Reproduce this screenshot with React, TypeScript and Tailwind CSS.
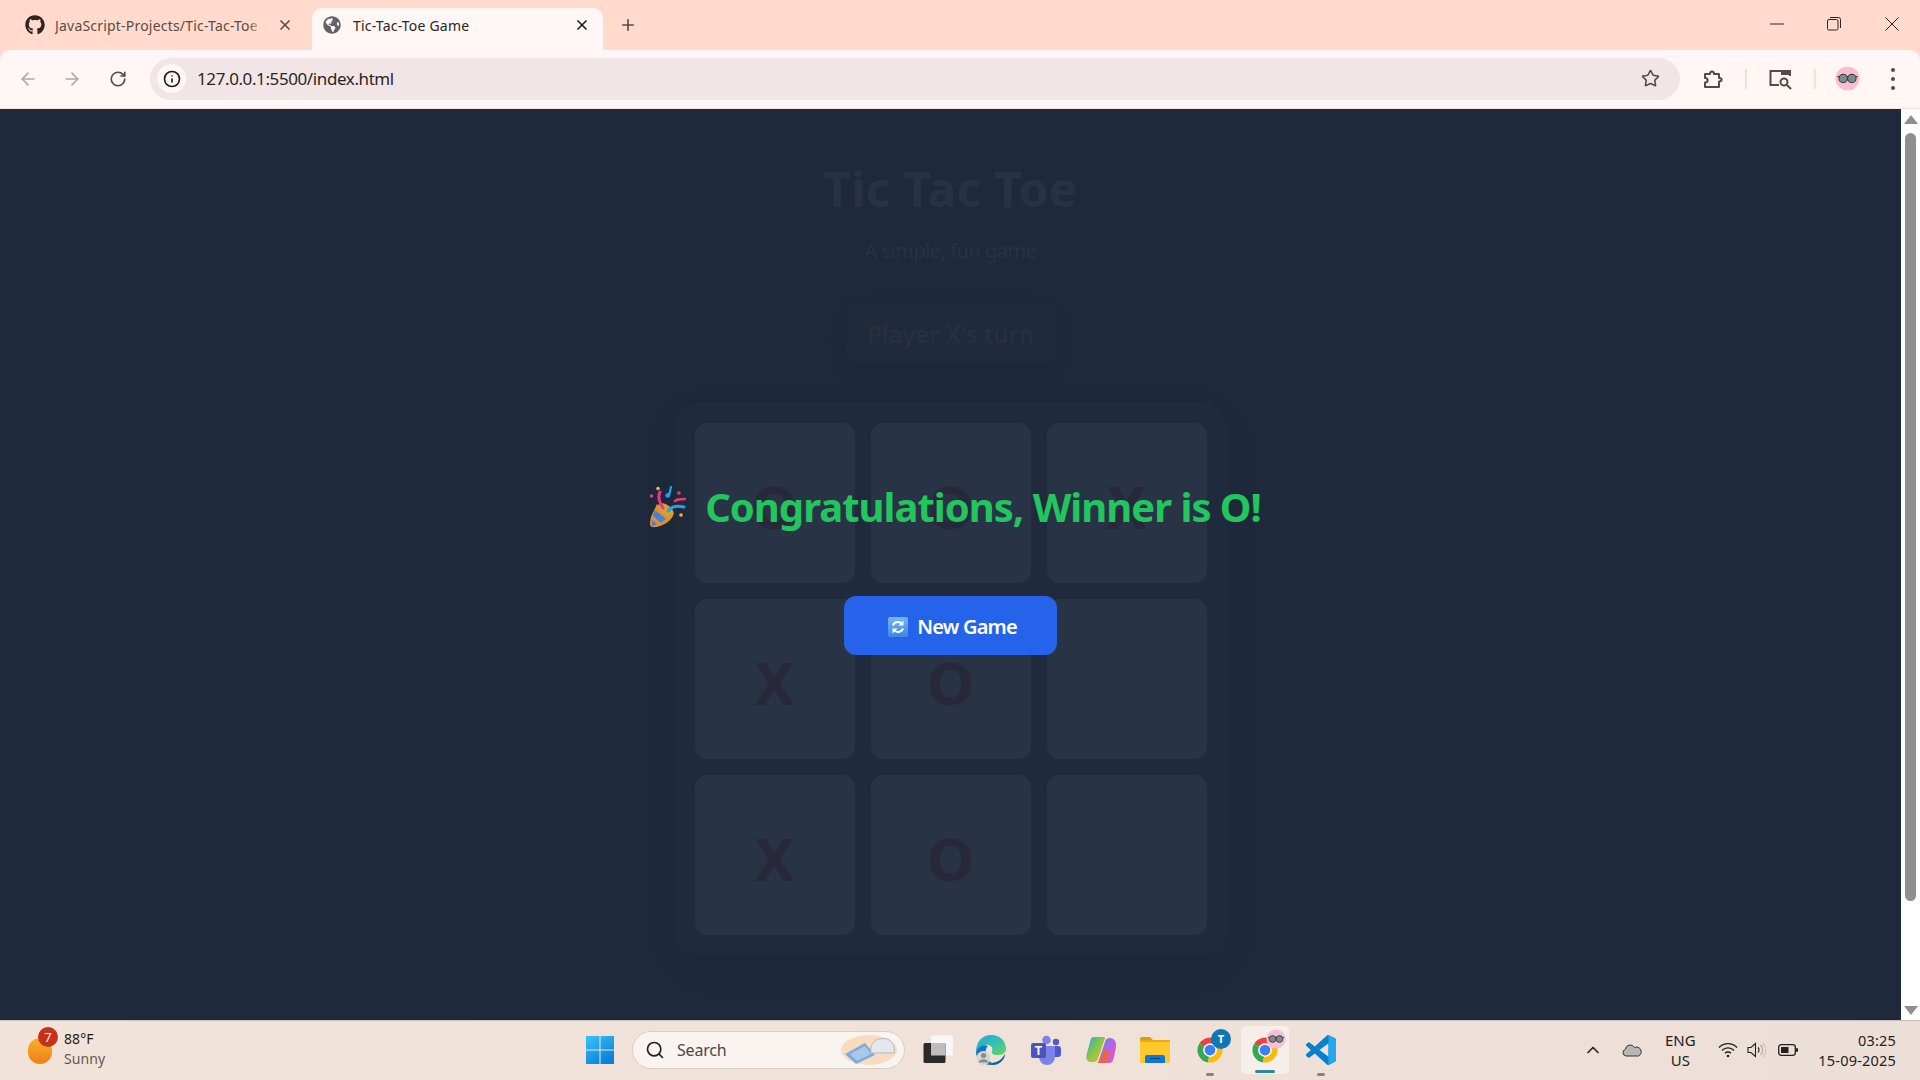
import React from "react";
import { FaGithub, FaGlobeAmericas } from "react-icons/fa";
import { ArrowLeft, ArrowRight, RotateCw, Info, Star, X, Plus, ChevronUp, Search } from "lucide-react";

function Glasses({ size }: { size: number }) {
  return (
    <svg width={size} height={size} viewBox="0 0 26 26">
      <circle cx="13" cy="13" r="12.5" fill="#f9bdd4" />
      <path d="M2.5 11 H23.5" stroke="#3f3f46" strokeWidth="1.2" />
      <circle cx="8.5" cy="13" r="4.4" fill="#7d8a8a" stroke="#33363a" strokeWidth="1.1" />
      <circle cx="17.5" cy="13" r="4.4" fill="#7d8a8a" stroke="#33363a" strokeWidth="1.1" />
    </svg>
  );
}

function Chrome({ size = 30 }: { size?: number }) {
  return (
    <svg width={size} height={size} viewBox="0 0 48 48">
      <path d="M24 24 L6.68 14 A20 20 0 0 1 41.32 14 Z" fill="#e8453c" />
      <path d="M24 24 L21 44 A20 20 0 0 1 6.68 14 Z" fill="#34a853" />
      <path d="M24 24 L41.32 14 A20 20 0 0 1 21 43.8 Z" fill="#fbbc05" />
      <circle cx="24" cy="24" r="11" fill="#ffffff" />
      <circle cx="24" cy="24" r="8.6" fill="#3b7ff0" />
    </svg>
  );
}

function Edge() {
  return (
    <svg width="30" height="30" viewBox="0 0 30 30">
      <defs>
        <linearGradient id="edgeA" x1="0" y1="0" x2="1" y2="1">
          <stop offset="0" stopColor="#1ea7e0" />
          <stop offset="0.6" stopColor="#39c5a5" />
          <stop offset="1" stopColor="#6fd64f" />
        </linearGradient>
      </defs>
      <path d="M15 0 C24 0 30 6 30 14 C30 19 25 20 21 20 C17 20 15 18 16 16 C18 12 13 9 9 10 C4 11 1 15 0 17 C0 7 6 0 15 0 Z" fill="url(#edgeA)" />
      <path d="M0 17 C2 11 8 9 12 11 C8 14 9 24 16 28 C18 29 20 30 15 30 C7 30 0 25 0 17 Z" fill="#1473c4" />
      <path d="M16 28 C21 27 25 26 29 19 C29 25 23 30 17 30 Z" fill="#0e5ea8" />
      <circle cx="7.5" cy="23" r="7" fill="#d8d4cf" />
      <circle cx="7.5" cy="20.5" r="2.6" fill="#8c8c8c" />
      <path d="M2.5 27.5 A5.2 4.4 0 0 1 12.5 27.5 Z" fill="#8c8c8c" />
    </svg>
  );
}

function Teams() {
  return (
    <svg width="30" height="30" viewBox="0 0 30 30">
      <circle cx="25" cy="7" r="3.2" fill="#5059c9" />
      <rect x="19" y="11" width="11" height="11" rx="3" fill="#5059c9" />
      <circle cx="15.5" cy="5" r="4.3" fill="#7b83eb" />
      <path d="M8 11 H24 V22 A8 8 0 0 1 8 22 Z" fill="#7b83eb" />
      <rect x="0" y="8" width="15" height="15" rx="2" fill="#4b53bc" />
      <text x="7.5" y="19.5" textAnchor="middle" fontSize="12" fontWeight="700" fill="#fff" fontFamily="Liberation Sans">T</text>
    </svg>
  );
}

function Copilot() {
  return (
    <svg width="30" height="30" viewBox="0 0 30 30">
      <defs>
        <linearGradient id="copA" x1="0" y1="0" x2="1" y2="1">
          <stop offset="0" stopColor="#1fa8e0" />
          <stop offset="0.5" stopColor="#8fc63f" />
          <stop offset="1" stopColor="#f5b63c" />
        </linearGradient>
        <linearGradient id="copB" x1="0" y1="0" x2="1" y2="1">
          <stop offset="0" stopColor="#3a8fe8" />
          <stop offset="0.5" stopColor="#b765e0" />
          <stop offset="1" stopColor="#f0589a" />
        </linearGradient>
      </defs>
      <path d="M8 2 H17 C20 2 19 4 18 6 L12 24 C11 27 8 27 5 27 C1 27 -1 23 1 18 L4 7 C5 3 6 2 8 2 Z" fill="url(#copA)" />
      <path d="M14 28 H23 C26 28 27 26 28 22 L30 12 C31 7 28 3 24 3 C21 3 20 4 19 7 L13 25 C12 27 13 28 14 28 Z" fill="url(#copB)" />
      <path d="M11 28 H18 C20 28 21 25 22 22 L23 18 L18 14 C16 20 15 26 11 28 Z" fill="#f0653f" />
    </svg>
  );
}

function Folder() {
  return (
    <svg width="30" height="26" viewBox="0 0 30 26">
      <path d="M0 2 A2 2 0 0 1 2 0 H10 L13 3 H0 Z" fill="#d99c0a" />
      <path d="M0 3 H30 V25 A1 1 0 0 1 29 26 H1 A1 1 0 0 1 0 25 Z" fill="#ffc92e" />
      <path d="M0 3 H30 V5 H0 Z" fill="#e6a817" />
      <path d="M5 26 V20 A2 2 0 0 1 7 18 H23 A2 2 0 0 1 25 20 V26 Z" fill="#0f78d4" />
      <path d="M10 21.5 H20" stroke="#073f80" strokeWidth="1" />
    </svg>
  );
}

function VSCode() {
  return (
    <svg width="30" height="30" viewBox="0 0 24 24">
      <path d="M23.15 2.587L18.21.21a1.494 1.494 0 0 0-1.705.29l-9.46 8.63-4.12-3.128a.999.999 0 0 0-1.276.057L.327 7.261A1 1 0 0 0 .326 8.74L3.899 12 .326 15.26a1 1 0 0 0 .001 1.479L1.65 17.94a.999.999 0 0 0 1.276.057l4.12-3.128 9.46 8.63a1.492 1.492 0 0 0 1.704.29l4.942-2.377A1.5 1.5 0 0 0 24 20.06V3.939a1.5 1.5 0 0 0-.85-1.352zm-5.146 14.861L10.826 12l7.178-5.448v10.896z" fill="#0a7fcd" />
      <path d="M18 0.05 L23.15 2.587 A1.5 1.5 0 0 1 24 3.94 V20.06 A1.5 1.5 0 0 1 23.15 21.41 L18 23.95 Z" fill="#22a7f2" />
    </svg>
  );
}

function WindowsLogo() {
  return (
    <svg width="30" height="30" viewBox="0 0 30 30">
      <defs>
        <linearGradient id="winA" x1="0" y1="0" x2="0.6" y2="1">
          <stop offset="0" stopColor="#36c5f5" />
          <stop offset="1" stopColor="#0b7fdc" />
        </linearGradient>
      </defs>
      <path d="M1 1 H14.5 V14.5 H1 Z M15.5 1 H29 V14.5 H15.5 Z M1 15.5 H14.5 V29 H1 Z M15.5 15.5 H29 V29 H15.5 Z" fill="url(#winA)" />
    </svg>
  );
}

function TaskView() {
  return (
    <svg width="30" height="30" viewBox="0 0 30 30">
      <rect x="8" y="0.5" width="22" height="20" rx="1.5" fill="#f7f7f7" />
      <rect x="0.5" y="8" width="22" height="20" rx="1.5" fill="#2a2a2a" />
      <rect x="8" y="8" width="14.5" height="12.5" fill="#bdbdbd" />
    </svg>
  );
}

function Popper() {
  return (
    <svg width="40" height="42" viewBox="-3 0 40 42">
      <path d="M8 18 L24 30 C20 38 8 42 3 41 C0 40 1 36 2 31 Z" fill="#e0912f" />
      <path d="M6 24 L17 33 L12 37 L4 30 Z" fill="#4a7fd6" />
      <path d="M3 34 L8 38 L3 40.5 Z" fill="#4a7fd6" />
      <ellipse cx="17" cy="24" rx="9" ry="5" transform="rotate(38 17 24)" fill="#d6a02c" />
      <path d="M14 22 C10 16 9 10 11 6" stroke="#f0367f" strokeWidth="3" fill="none" strokeLinecap="round" />
      <path d="M19 25 C22 21 27 19 35 21" stroke="#2f9ce8" strokeWidth="3" fill="none" strokeLinecap="round" />
      <path d="M26 15 C28 13 31 13 36 13" stroke="#f0367f" strokeWidth="2.6" fill="none" strokeLinecap="round" />
      <path d="M22 1 L20 10 C18 12 16 9 19 8" stroke="#2f9ce8" strokeWidth="2.2" fill="none" strokeLinecap="round" />
      <circle cx="9" cy="2.5" r="1.8" fill="#f5b63c" />
      <circle cx="2.5" cy="10" r="1.8" fill="#e0408f" />
      <circle cx="30" cy="7" r="1.8" fill="#e0408f" />
      <circle cx="32" cy="29" r="1.8" fill="#f5b63c" />
    </svg>
  );
}

function RefreshEmoji() {
  return (
    <svg width="20" height="20" viewBox="0 0 20 20">
      <defs>
        <linearGradient id="refA" x1="0" y1="0" x2="0" y2="1">
          <stop offset="0" stopColor="#70b8f8" />
          <stop offset="1" stopColor="#3f86e0" />
        </linearGradient>
      </defs>
      <rect width="20" height="20" rx="2" fill="url(#refA)" />
      <path d="M5 8.5 A5.2 5.2 0 0 1 14 7" stroke="#fff" strokeWidth="2" fill="none" />
      <path d="M15 11.5 A5.2 5.2 0 0 1 6 13" stroke="#fff" strokeWidth="2" fill="none" />
      <path d="M15.5 3.5 V8.5 H10.5 Z" fill="#fff" />
      <path d="M4.5 16.5 V11.5 H9.5 Z" fill="#fff" />
    </svg>
  );
}

function Cell({ v }: { v: string }) {
  return (
    <div className="w-[160px] h-[160px] rounded-[12px] bg-[#283345] flex items-center justify-center text-[60px] leading-none font-bold text-[#28283b] pt-[5px]">
      {v}
    </div>
  );
}

const cells = ["O", "O", "X", "X", "O", "", "X", "O", ""];

export default function App() {
  return (
    <div className="w-[1920px] h-[1080px] flex flex-col overflow-hidden bg-[#ffdacd] font-['Noto_Sans','Open_Sans',sans-serif]">
      {/* Tab strip */}
      <div className="h-[50px] shrink-0 flex items-end text-[14px] tracking-[0.2px]">
        <div className="w-[312px] h-[42px] flex items-center pl-[25px] pb-[8px] text-[#5d4a44]">
          <FaGithub className="w-[20px] h-[20px] text-[#2d2320] shrink-0" />
          <span className="relative ml-[10px] w-[208px] whitespace-nowrap overflow-hidden">
            JavaScript-Projects/Tic-Tac-Toe
            <span className="absolute right-0 top-0 bottom-0 w-[14px] bg-gradient-to-r from-transparent to-[#ffdacd]" />
          </span>
          <X className="ml-[14px] w-[16px] h-[16px] shrink-0" strokeWidth={2.5} />
        </div>
        <div className="w-[291px] h-[42px] bg-[#fff7f5] rounded-t-[10px] flex items-center pl-[11px] pb-[8px] text-[#2e2522]">
          <FaGlobeAmericas className="w-[18px] h-[18px] text-[#5f6368] shrink-0" />
          <span className="ml-[12px] w-[221px] whitespace-nowrap">Tic-Tac-Toe Game</span>
          <X className="w-[16px] h-[16px] shrink-0 text-[#1f1a18]" strokeWidth={2.5} />
        </div>
        <div className="h-[42px] flex items-center ml-[16px] pb-[8px] text-[#5d4a44]">
          <Plus className="w-[18px] h-[18px]" strokeWidth={2.2} />
        </div>
        <div className="flex-1" />
        <div className="h-[50px] flex items-center text-[#2e2522] pb-[2px]">
          <svg width="14" height="2" viewBox="0 0 14 2"><path d="M0 1H14" stroke="#2e2522" strokeWidth="1" /></svg>
          <svg className="ml-[43px]" width="14" height="14" viewBox="0 0 14 14" fill="none" stroke="#2e2522" strokeWidth="1">
            <rect x="0.5" y="2.5" width="10.5" height="10.5" rx="1.5" />
            <path d="M3 0.5 H11.5 A2 2 0 0 1 13.5 2.5 V11" />
          </svg>
          <svg className="ml-[44px] mr-[21px]" width="14" height="14" viewBox="0 0 14 14" fill="none" stroke="#2e2522" strokeWidth="1">
            <path d="M0.5 0.5 L13.5 13.5 M13.5 0.5 L0.5 13.5" />
          </svg>
        </div>
      </div>

      {/* Toolbar */}
      <div className="h-[59px] shrink-0 bg-[#fff7f5] rounded-t-[10px] border-b-[1px] border-[#ffe3da] flex items-center pb-[1px]">
        <ArrowLeft className="ml-[18px] w-[20px] h-[20px] text-[#b0a8a5]" strokeWidth={2} />
        <ArrowRight className="ml-[24px] w-[20px] h-[20px] text-[#b0a8a5]" strokeWidth={2} />
        <RotateCw className="ml-[27px] w-[18px] h-[18px] text-[#5a4842]" strokeWidth={2.2} />
        <div className="ml-[23px] w-[1530px] h-[42px] rounded-full bg-[#f1e6e5] flex items-center pl-[7px]">
          <div className="w-[29px] h-[29px] rounded-full bg-[#fff7f5] flex items-center justify-center">
            <Info className="w-[18px] h-[18px] text-[#1f1a18]" strokeWidth={2.2} />
          </div>
          <span className="ml-[11px] text-[17px] tracking-[-0.4px] text-[#2c2522]">127.0.0.1:5500/index.html</span>
          <div className="flex-1" />
          <Star className="w-[19px] h-[19px] mr-[20px] text-[#5a4842]" strokeWidth={2} />
        </div>
        <svg className="ml-[22px]" width="22" height="22" viewBox="0 0 22 22" fill="none" stroke="#5a4842" strokeWidth="2">
          <path d="M3 6 H8 C8 2.5 12 2.5 12 6 H17 V10 C20.5 10 20.5 13.5 17 13.5 V19 H3 V14.5 C6.5 14.5 6.5 10 3 10 Z" strokeLinejoin="round" />
        </svg>
        <div className="ml-[21px] w-[2px] h-[20px] bg-[#ffdacd]" />
        <svg className="ml-[22px]" width="24" height="22" viewBox="0 0 24 22" fill="none" stroke="#5a4842" strokeWidth="2">
          <path d="M10 17 H1.5 V3 H21 V8" />
          <path d="M12 2 H22 V7 H12 Z" fill="#5a4842" stroke="none" />
          <circle cx="15" cy="14" r="3.5" />
          <path d="M18 17 L22 21" />
        </svg>
        <div className="ml-[21px] w-[2px] h-[20px] bg-[#ffdacd]" />
        <div className="ml-[19px]"><Glasses size={25} /></div>
        <div className="ml-[31px] flex flex-col gap-[5px]">
          <div className="w-[4px] h-[4px] rounded-full bg-[#5a4842]" />
          <div className="w-[4px] h-[4px] rounded-full bg-[#5a4842]" />
          <div className="w-[4px] h-[4px] rounded-full bg-[#5a4842]" />
        </div>
      </div>

      {/* Viewport */}
      <div className="flex-1 min-h-0 flex">
        <main className="relative flex-1 bg-[#1e293b] flex flex-col items-center pt-[50px]">
          <h1 className="text-[48px] leading-[60px] font-bold tracking-[0.2px] text-[#283245]">Tic Tac Toe</h1>
          <p className="mt-[18px] text-[20px] leading-[28px] text-[#283245] tracking-[-0.5px]">A simple, fun game</p>
          <div className="mt-[39px] w-[210px] h-[60px] rounded-[12px] bg-[#1f2a3c] shadow-[0_8px_24px_rgba(0,0,0,0.06)] flex items-center justify-center text-[24px] font-semibold tracking-[-0.15px] text-[#28303e]">
            Player X's turn
          </div>
          <div className="mt-[39px] w-[552px] h-[552px] rounded-[24px] bg-[#1f2a3c] shadow-[0_12px_40px_rgba(0,0,0,0.05)] grid grid-cols-[160px_160px_160px] gap-[16px] justify-center content-center">
            {cells.map((c, i) => (
              <Cell key={i} v={c} />
            ))}
          </div>

          {/* Winner overlay */}
          <div className="absolute inset-0 flex flex-col items-center pt-[368px]">
            <div className="flex items-center gap-[19px] pl-[6px]">
              <Popper />
              <span className="text-[40px] leading-[60px] font-bold tracking-[-1px] text-[#22c55e]">Congratulations, Winner is O!</span>
            </div>
            <button className="mt-[59px] w-[213px] h-[59px] rounded-[12px] bg-[#2563eb] flex items-center justify-center gap-[9px] pl-[4px] pt-[3px] text-[20px] font-semibold tracking-[-0.8px] text-white">
              <RefreshEmoji />
              New Game
            </button>
          </div>
        </main>
        {/* Scrollbar */}
        <div className="w-[19px] bg-white flex flex-col items-center pt-[6px] pb-[5px]">
          <svg width="14" height="9" viewBox="0 0 14 9"><path d="M7 0 L14 9 H0 Z" fill="#8f8f8f" /></svg>
          <div className="mt-[9px] w-[11px] h-[768px] rounded-full bg-[#8f8f8f]" />
          <div className="flex-1" />
          <svg width="14" height="9" viewBox="0 0 14 9"><path d="M7 9 L14 0 H0 Z" fill="#8f8f8f" /></svg>
        </div>
      </div>

      {/* Taskbar */}
      <div className="relative h-[60px] shrink-0 border-t border-[#c9bfb8] pb-[1px] bg-gradient-to-r from-[#f2e3d8] via-[#f0e2d9] to-[#ecdfd8] flex items-center text-[#1f1a18]">
        <div className="relative ml-[28px] w-[24px] h-[26px] rounded-full bg-gradient-to-b from-[#f5b32a] to-[#ef7d14] mt-[2px]">
          <div className="absolute -top-[11px] left-[10px] w-[20px] h-[20px] rounded-full bg-[#c9301c] text-white text-[13px] leading-[20px] text-center">7</div>
        </div>
        <div className="ml-[12px] w-[44px] flex flex-col text-[14px] leading-[20px] tracking-[0.1px] pb-[2px]">
          <span>88°F</span>
          <span className="text-[#5f5a57]">Sunny</span>
        </div>

        <div className="ml-[477px]"><WindowsLogo /></div>
        <div className="ml-[17px] w-[273px] h-[38px] rounded-full bg-[#faf4f0] border border-[#d9cdc5] flex items-center pl-[12px]">
          <Search className="w-[20px] h-[20px] text-[#222]" strokeWidth={2} />
          <span className="ml-[12px] text-[16px] tracking-[-0.2px] text-[#4b4744]">Search</span>
          <div className="flex-1" />
          <svg className="mr-[7px]" width="56" height="30" viewBox="0 0 56 30">
            <ellipse cx="28" cy="15" rx="28" ry="15" fill="#f7dcc0" />
            <path d="M4 19 L24 8 L34 20 L15 29 Z" fill="#7ea9dc" />
            <path d="M9 19 L24 11 L30 19 L16 26 Z" fill="#a9c7ea" />
            <path d="M30 18 C28 6 38 2 46 4 C52 6 54 12 53 18 Z" fill="#e3e8ee" stroke="#aeb9c6" strokeWidth="1" />
          </svg>
        </div>

        <div className="ml-[18px]"><TaskView /></div>
        <div className="ml-[23px]"><Edge /></div>
        <div className="ml-[25px]"><Teams /></div>
        <div className="ml-[25px]"><Copilot /></div>
        <div className="ml-[24px]"><Folder /></div>

        <div className="relative ml-[25px] w-[30px] h-[30px]">
          <Chrome />
          <div className="absolute -top-[6px] left-[16px] w-[20px] h-[20px] rounded-full bg-[#0f76b8] text-white text-[11px] leading-[20px] text-center font-bold">T</div>
          <div className="absolute -bottom-[11px] left-[11px] w-[8px] h-[3px] rounded-full bg-[#8a817b]" />
        </div>

        <div className="relative ml-[16px] w-[48px] h-[48px] rounded-[5px] bg-[#f6efe9] flex items-center justify-center">
          <Chrome />
          <div className="absolute top-[3px] left-[25px]"><Glasses size={20} /></div>
          <div className="absolute bottom-[1px] left-[14px] w-[20px] h-[3px] rounded-full bg-[#2a8a9e]" />
        </div>

        <div className="relative ml-[17px] w-[30px] h-[30px]">
          <VSCode />
          <div className="absolute -bottom-[11px] left-[11px] w-[8px] h-[3px] rounded-full bg-[#8a817b]" />
        </div>

        <div className="flex-1" />

        <ChevronUp className="w-[20px] h-[20px] text-[#222] mr-[19px]" strokeWidth={2} />
        <svg className="mr-[20px]" width="20" height="14" viewBox="0 0 20 14">
          <path d="M4 13 A3.5 3.5 0 0 1 3.5 6.2 A4.8 4.8 0 0 1 12.5 4.5 A4 4 0 0 1 16.5 13 Z" fill="#b8b5b2" stroke="#333" strokeWidth="1" />
        </svg>
        <div className="flex flex-col items-center text-[15px] leading-[20px] text-[#222] w-[36px] pb-[1px]">
          <span>ENG</span>
          <span>US</span>
        </div>
        <svg className="ml-[20px]" width="20" height="16" viewBox="0 0 20 16" fill="none" stroke="#222" strokeWidth="1.4">
          <path d="M1 5.5 A12.5 12.5 0 0 1 19 5.5" />
          <path d="M4 8.5 A8.2 8.2 0 0 1 16 8.5" />
          <path d="M7 11.2 A4.2 4.2 0 0 1 13 11.2" />
          <circle cx="10" cy="14" r="1.3" fill="#222" stroke="none" />
        </svg>
        <svg className="ml-[9px]" width="20" height="16" viewBox="0 0 20 16" fill="none" stroke="#222" strokeWidth="1.1">
          <path d="M1 5.5 H4 L8.5 1.5 V14.5 L4 10.5 H1 Z" />
          <path d="M11 5.5 A3.5 3.5 0 0 1 11 10.5" />
          <path d="M13.5 3 A7 7 0 0 1 13.5 13" stroke="#a9a4a0" />
          <path d="M16 1 A10 10 0 0 1 16 15" stroke="#c9c4c0" />
        </svg>
        <svg className="ml-[11px]" width="20" height="12" viewBox="0 0 20 12">
          <rect x="0.7" y="0.7" width="16.6" height="10.6" rx="2.5" fill="none" stroke="#222" strokeWidth="1.3" />
          <rect x="3" y="3" width="7.5" height="6" rx="0.5" fill="#222" />
          <rect x="18" y="4" width="2" height="4" rx="1" fill="#222" />
        </svg>
        <div className="ml-[20px] mr-[24px] flex flex-col items-end text-[14.5px] leading-[20px] tracking-[0.2px] text-[#222] pb-[1px]">
          <span>03:25</span>
          <span>15-09-2025</span>
        </div>
      </div>
    </div>
  );
}
